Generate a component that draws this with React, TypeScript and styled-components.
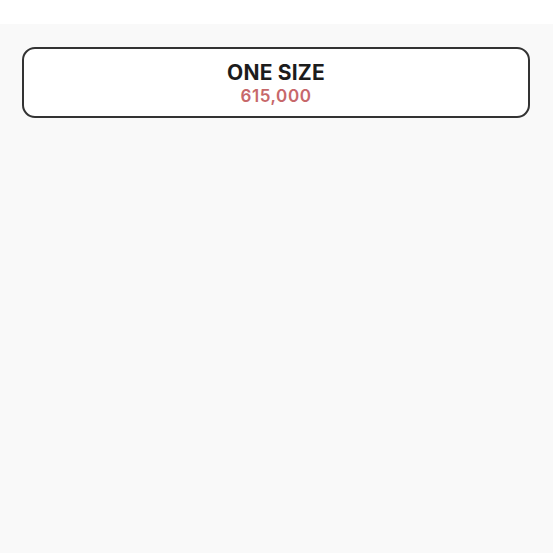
import React from 'react';
import styled, {createGlobalStyle} from "styled-components";

const GlobalStyle = createGlobalStyle`
    html, body {
        margin: 0;
        padding: 0;
        background: #ffffff;
        font-family: Inter, "Noto Sans", sans-serif;
    }
`

export default function App() {
    return (
        <>
            <GlobalStyle/>
            <TopBar/>
            <Page>
                <SizeCard>
                    <SizeTitle>ONE SIZE</SizeTitle>
                    <Price>615,000</Price>
                </SizeCard>
            </Page>
        </>
    );
}

const TopBar = styled.div`
    height: 24px;
    background: #ffffff;
`

const Page = styled.main`
    background: #f9f9f9;
    min-height: 529px;
    padding: 23px 22px 0 22px;
    box-sizing: border-box;
`

const SizeCard = styled.div`
    box-sizing: border-box;
    height: 71px;
    width: 508px;
    border: 2px solid #333333;
    border-radius: 13px;
    background: #ffffff;
    display: flex;
    flex-direction: column;
    align-items: center;
    justify-content: center;
    gap: 1px;
    padding-top: 2px;
`

const SizeTitle = styled.div`
    font-size: 21px;
    font-weight: 700;
    color: #1c1c1c;
    line-height: 24px;
    letter-spacing: 0.2px;
`

const Price = styled.div`
    font-size: 17px;
    font-weight: 600;
    color: #c7686a;
    line-height: 20px;
    letter-spacing: 0.6px;
`
